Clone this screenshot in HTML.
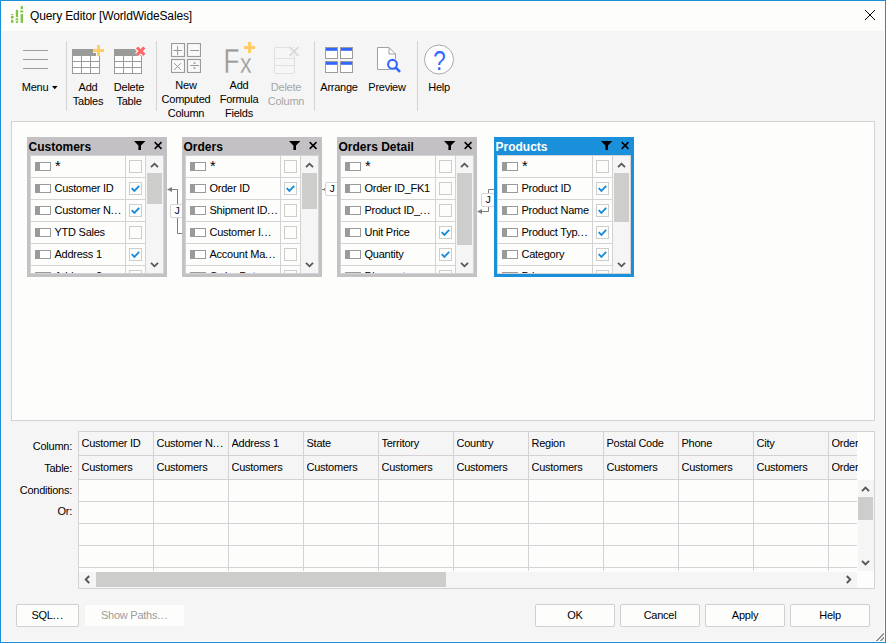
<!DOCTYPE html><html><head><meta charset="utf-8"><title>Query Editor</title><style>
html,body{margin:0;padding:0}
body{width:886px;height:643px;overflow:hidden;background:#f5f5f5;position:relative;font-family:"Liberation Sans",sans-serif;font-size:11px;color:#000;letter-spacing:-0.25px}
*{box-sizing:border-box}
.abs,.ic{position:absolute}
#win{position:absolute;left:0;top:0;width:886px;height:643px;border:1px solid #1a8fda;pointer-events:none;box-shadow:inset 0 0 0 1px #fefdf9}
#title{position:absolute;left:1px;top:1px;width:884px;height:30px;background:#fdfefc}
#title span{position:absolute;left:29px;top:8px;font-size:12px;line-height:15px;white-space:nowrap;letter-spacing:-0.13px}
.sep{position:absolute;top:41px;width:1px;height:70px;background:#d4d2d5}
.lbl{position:absolute;text-align:center;line-height:14px;white-space:nowrap;transform:translateX(-50%)}
.dis{color:#a6a6a6}
#tbline{position:absolute;left:1px;top:120px;width:884px;height:1px;background:#dedede}
#diagram{position:absolute;left:11px;top:121px;width:864px;height:300px;background:#fdfefc;border:1px solid #d4d2d5}
.tbl{position:absolute;top:137px;width:140px;height:140px}
.tt{position:absolute;left:1.5px;top:3px;font-weight:bold;font-size:12px;line-height:14px;white-space:nowrap;letter-spacing:0}
.lst{position:absolute;left:3px;top:18px;width:134px;height:119px;background:#fdfefc;overflow:hidden;border:1px solid #d4d2d5}
.row{position:absolute;left:0;width:115px;height:22px;border-bottom:1px solid #d4d2d5}
.ci{position:absolute;left:4px;top:6px;width:16px;height:9px;border:1px solid #9a9a9a;background:#fff;border-left:5px solid #9a9a9a}
.rl{position:absolute;left:23.5px;top:4px;line-height:13px;white-space:nowrap}
.cb{position:absolute;left:98px;top:4px;width:13px;height:13px;border:1px solid #cccecb;background:#fdfefc}
.cb svg{position:absolute;left:0;top:0}
.d{letter-spacing:0.55px}
.vl{position:absolute;top:0;width:1px;height:117px;background:#d4d2d5}
.sb{position:absolute;left:115px;top:0;width:17px;height:117px;background:#f5f5f5}
.th{position:absolute;left:1px;width:15px;background:#cdcecc}
.jb{position:absolute;width:14px;height:14px;background:#fff;border:1px solid #d6d6d6;border-radius:2px;font-family:'Liberation Mono',monospace;font-size:11px;line-height:12px;text-align:center;color:#0c0c3c;letter-spacing:0;padding-left:0px}
.gl{position:absolute;text-align:right;right:814px;line-height:13px;white-space:nowrap}
#grid{position:absolute;left:78px;top:431px;width:797px;height:158px;background:#fdfefc;border:1px solid #d4d2d5;overflow:hidden}
.hl{position:absolute;left:0;height:1px;background:#d4d2d5;width:778px}
.gv{position:absolute;top:0;width:1px;height:139px;background:#d4d2d5}
.gc{position:absolute;line-height:13px;white-space:nowrap}
.btn{position:absolute;top:604px;height:23px;background:#fdfefc;border:1px solid #d0ced1;border-radius:2px;text-align:center;line-height:21px}
</style></head><body>
<div id="title">
<svg class="ic" style="left:9px;top:4px" width="15" height="19" viewBox="0 0 15 19"><g fill="#82c345"><rect x="1" y="9" width="2.4" height="0.9"/><rect x="0.8" y="10.8" width="2.9" height="2.7" rx="1"/><rect x="1" y="14.8" width="2.4" height="3"/><rect x="5.8" y="4.9" width="2.3" height="7.2"/><rect x="5.5" y="13.2" width="2.9" height="2.1" rx="0.9"/><rect x="5.8" y="16" width="2.3" height="1.8"/><rect x="10.6" y="1" width="2.4" height="3.2" rx="0.8"/><rect x="10.1" y="5.5" width="3.3" height="2.1" rx="0.9"/><rect x="10.6" y="9" width="2.4" height="8.8"/></g></svg>
<span>Query Editor [WorldWideSales]</span>
<svg class="ic" style="left:863px;top:8px" width="12" height="12" viewBox="0 0 12 12"><path d="M1 1L11 11M11 1L1 11" stroke="#000" stroke-width="1" fill="none"/></svg>
</div>
<svg class="ic" style="left:23px;top:49px" width="26" height="21" viewBox="0 0 26 21"><path d="M0 1.5H25M0 10.5H25M0 19.5H25" stroke="#9c9c9c" stroke-width="1"/></svg>
<div class="lbl" style="left:35px;top:80px">Menu</div>
<svg class="ic" style="left:52px;top:86px" width="6" height="4" viewBox="0 0 6 4"><path d="M0 0H5.6L2.8 3.2Z" fill="#000"/></svg>
<div class="sep" style="left:66px"></div>
<div class="sep" style="left:156px"></div>
<div class="sep" style="left:314px"></div>
<div class="sep" style="left:417px"></div>
<svg class="ic" style="left:72px;top:43px" width="36" height="33" viewBox="0 0 36 33"><rect x="0" y="6" width="28" height="7" fill="#9a9b99"/><rect x="0.5" y="12.5" width="27" height="18" fill="#fff" stroke="#9a9b99"/><path d="M9.5 13V30M18.5 13V30M1 18.5H27M1 24.5H27" stroke="#9a9b99" stroke-width="1" fill="none"/><path d="M21 7.5H32M26.5 2V13" stroke="#f5f5f5" stroke-width="5" fill="none"/><path d="M21 7.5H32M26.5 2V13" stroke="#ffcc66" stroke-width="3" fill="none"/></svg>
<svg class="ic" style="left:114px;top:43px" width="36" height="33" viewBox="0 0 36 33"><rect x="0" y="6" width="28" height="7" fill="#9a9b99"/><rect x="0.5" y="12.5" width="27" height="18" fill="#fff" stroke="#9a9b99"/><path d="M9.5 13V30M18.5 13V30M1 18.5H27M1 24.5H27" stroke="#9a9b99" stroke-width="1" fill="none"/><path d="M23 4.5L30.4 11.9M30.4 4.5L23 11.9" stroke="#f5f5f5" stroke-width="5.5" fill="none"/><path d="M23 4.5L30.4 11.9M30.4 4.5L23 11.9" stroke="#ff6666" stroke-width="3" fill="none"/></svg>
<div class="lbl" style="left:88px;top:80px">Add<br>Tables</div>
<div class="lbl" style="left:129px;top:80px">Delete<br>Table</div>
<svg class="ic" style="left:171px;top:43px" width="30" height="30" viewBox="0 0 30 30"><g fill="#f9f9f9" stroke="#9a9a9a" stroke-width="1.15"><rect x="0.5" y="0.5" width="13" height="13"/><rect x="16.5" y="0.5" width="13" height="13"/><rect x="0.5" y="16.5" width="13" height="13"/><rect x="16.5" y="16.5" width="13" height="13"/></g><path d="M2.3 7.5H11M6.6 3V12M19.2 7.5H28M3.2 20.2L9.9 26.9M9.9 20.2L3.2 26.9M19.2 22.5H28" stroke="#999" stroke-width="1" fill="none"/><rect x="22.6" y="19.2" width="1.8" height="1.7" fill="#999"/><rect x="22.6" y="24.2" width="1.8" height="1.7" fill="#999"/></svg>
<div class="lbl" style="left:186px;top:78px">New<br>Computed<br>Column</div>
<svg class="ic" style="left:220px;top:40px" width="40" height="40" viewBox="0 0 40 40" font-family="Liberation Sans, sans-serif" fill="#999" stroke="#f5f5f5" stroke-width="0.35"><text transform="translate(3.6 32.6) scale(0.76 1)" font-size="34.4" x="0" y="0">F</text><text transform="translate(19.9 32.6) scale(0.84 1)" font-size="28" x="0" y="0">x</text></svg>
<svg class="ic" style="left:244px;top:42px" width="11" height="11" viewBox="0 0 11 11"><path d="M0 5.5H11M5.5 0V11" stroke="#ffcc66" stroke-width="3" fill="none"/></svg>
<div class="lbl" style="left:239px;top:78px">Add<br>Formula<br>Fields</div>
<svg class="ic" style="left:274px;top:45px" width="27" height="30" viewBox="0 0 27 30"><rect x="0.5" y="2.5" width="20" height="26" rx="1.5" fill="#f6f6f6" stroke="#e0e0e0"/><path d="M1 13.5H20M1 20.5H20" stroke="#e0e0e0"/><path d="M15.5 2L24.5 11M24.5 2L15.5 11" stroke="#f5f5f5" stroke-width="4"/><path d="M15.5 2L24.5 11M24.5 2L15.5 11" stroke="#dbdbdb" stroke-width="2.1"/></svg>
<div class="lbl dis" style="left:286px;top:80px">Delete<br>Column</div>
<svg class="ic" style="left:325px;top:47px" width="28" height="26" viewBox="0 0 28 26"><rect x="0.5" y="0.5" width="12" height="11" fill="#fff" stroke="#9c9c9c"/><rect x="1" y="1" width="11" height="2.8" fill="#3366ff"/><rect x="15.5" y="0.5" width="12" height="11" fill="#fff" stroke="#9c9c9c"/><rect x="16" y="1" width="11" height="2.8" fill="#3366ff"/><rect x="0.5" y="14.5" width="12" height="11" fill="#fff" stroke="#9c9c9c"/><rect x="1" y="15" width="11" height="2.8" fill="#3366ff"/><rect x="15.5" y="14.5" width="12" height="11" fill="#fff" stroke="#9c9c9c"/><rect x="16" y="15" width="11" height="2.8" fill="#3366ff"/></svg>
<div class="lbl" style="left:339px;top:80px">Arrange</div>
<svg class="ic" style="left:376px;top:46px" width="26" height="28" viewBox="0 0 26 28"><path d="M1.5 1.5H13L19.5 8V23.5H1.5Z" fill="#fff" stroke="#a0a0a0"/><path d="M13 1.5V8H19.5" fill="none" stroke="#a0a0a0"/><circle cx="16.5" cy="18.3" r="6" fill="#f5f5f5"/><circle cx="16.5" cy="18.3" r="4.4" fill="#fff" stroke="#3366ff" stroke-width="2.1"/><path d="M19.8 21.6L24 25.8" stroke="#3366ff" stroke-width="2.6"/></svg>
<div class="lbl" style="left:387px;top:80px">Preview</div>
<svg class="ic" style="left:423px;top:44px" width="32" height="32" viewBox="0 0 32 32"><circle cx="16" cy="15.5" r="14.5" fill="#fff" stroke="#a8a8a8"/><text transform="translate(16.4 26.2) scale(0.8 1)" x="0" y="0" text-anchor="middle" font-family="Liberation Sans, sans-serif" font-size="28" fill="#3366ff">?</text></svg>
<div class="lbl" style="left:439px;top:80px">Help</div>
<div id="diagram"></div>
<svg class="ic" style="left:160px;top:170px" width="340" height="90" viewBox="0 0 340 90"><g fill="none" stroke="#7e7e7e" stroke-width="1"><path d="M8 19.5H17.5V63.5H22"/><path d="M162 19.5H177"/><path d="M334 19.5H328.5V41.5H318"/></g><path d="M7 19.5L12 17V22Z" fill="#7e7e7e"/><path d="M317 41.5L322 39V44Z" fill="#7e7e7e"/><path d="M163 19.5L165.5 17.5V21.5Z" fill="#7e7e7e"/></svg><div class="jb" style="left:170px;top:204px">J</div><div class="jb" style="left:325px;top:182px">J</div><div class="jb" style="left:481px;top:193px">J</div>
<div class="tbl" style="left:27px;background:#c3c1c4">
<div class="tt" style="color:#000">Customers</div>
<svg class="ic" style="left:107px;top:4px" width="12" height="10" viewBox="0 0 12 10"><path d="M0 0H11.4L7 4.6V9H4.4V4.6Z" fill="#000"/></svg>
<svg class="ic" style="left:127px;top:4px" width="9" height="9" viewBox="0 0 9 9"><path d="M0.7 1.1L7.5 7.9M7.5 1.1L0.7 7.9" stroke="#000" stroke-width="1.5" fill="none"/></svg>
<div class="lst">
<div class="row" style="top:0px"><i class="ci"></i><span class="rl" style="left:24px;top:3px;font-size:14.5px;line-height:14px">*</span><i class="cb"></i></div>
<div class="row" style="top:22px"><i class="ci"></i><span class="rl">Customer ID</span><i class="cb"><svg width="11" height="11" viewBox="0 0 11 11"><path d="M1.7 5.2L4.4 7.9L9.2 2.8" stroke="#188ada" stroke-width="1.8" fill="none"/></svg></i></div>
<div class="row" style="top:44px"><i class="ci"></i><span class="rl">Customer N<span class="d">...</span></span><i class="cb"><svg width="11" height="11" viewBox="0 0 11 11"><path d="M1.7 5.2L4.4 7.9L9.2 2.8" stroke="#188ada" stroke-width="1.8" fill="none"/></svg></i></div>
<div class="row" style="top:66px"><i class="ci"></i><span class="rl">YTD Sales</span><i class="cb"></i></div>
<div class="row" style="top:88px"><i class="ci"></i><span class="rl">Address 1</span><i class="cb"><svg width="11" height="11" viewBox="0 0 11 11"><path d="M1.7 5.2L4.4 7.9L9.2 2.8" stroke="#188ada" stroke-width="1.8" fill="none"/></svg></i></div>
<div class="row" style="top:110px"><i class="ci"></i><span class="rl">Address 2</span><i class="cb"></i></div>
<div class="vl" style="left:94px"></div><div class="vl" style="left:114px"></div>
<div class="sb">
<svg class="ic" style="left:4px;top:6px" width="9" height="6" viewBox="0 0 9 6"><path d="M1 5.2L4.5 1.7L8 5.2" stroke="#565656" stroke-width="1.8" fill="none"/></svg>
<div class="th" style="top:17px;height:31px"></div>
<svg class="ic" style="left:4px;top:106px" width="9" height="6" viewBox="0 0 9 6"><path d="M1 0.8L4.5 4.3L8 0.8" stroke="#565656" stroke-width="1.8" fill="none"/></svg>
</div>
</div></div>
<div class="tbl" style="left:182px;background:#c3c1c4">
<div class="tt" style="color:#000">Orders</div>
<svg class="ic" style="left:107px;top:4px" width="12" height="10" viewBox="0 0 12 10"><path d="M0 0H11.4L7 4.6V9H4.4V4.6Z" fill="#000"/></svg>
<svg class="ic" style="left:127px;top:4px" width="9" height="9" viewBox="0 0 9 9"><path d="M0.7 1.1L7.5 7.9M7.5 1.1L0.7 7.9" stroke="#000" stroke-width="1.5" fill="none"/></svg>
<div class="lst">
<div class="row" style="top:0px"><i class="ci"></i><span class="rl" style="left:24px;top:3px;font-size:14.5px;line-height:14px">*</span><i class="cb"></i></div>
<div class="row" style="top:22px"><i class="ci"></i><span class="rl">Order ID</span><i class="cb"><svg width="11" height="11" viewBox="0 0 11 11"><path d="M1.7 5.2L4.4 7.9L9.2 2.8" stroke="#188ada" stroke-width="1.8" fill="none"/></svg></i></div>
<div class="row" style="top:44px"><i class="ci"></i><span class="rl">Shipment ID<span class="d">...</span></span><i class="cb"></i></div>
<div class="row" style="top:66px"><i class="ci"></i><span class="rl">Customer I<span class="d">...</span></span><i class="cb"></i></div>
<div class="row" style="top:88px"><i class="ci"></i><span class="rl">Account Ma<span class="d">...</span></span><i class="cb"></i></div>
<div class="row" style="top:110px"><i class="ci"></i><span class="rl">Order Date</span><i class="cb"></i></div>
<div class="vl" style="left:94px"></div><div class="vl" style="left:114px"></div>
<div class="sb">
<svg class="ic" style="left:4px;top:6px" width="9" height="6" viewBox="0 0 9 6"><path d="M1 5.2L4.5 1.7L8 5.2" stroke="#565656" stroke-width="1.8" fill="none"/></svg>
<div class="th" style="top:17px;height:36px"></div>
<svg class="ic" style="left:4px;top:106px" width="9" height="6" viewBox="0 0 9 6"><path d="M1 0.8L4.5 4.3L8 0.8" stroke="#565656" stroke-width="1.8" fill="none"/></svg>
</div>
</div></div>
<div class="tbl" style="left:337px;background:#c3c1c4">
<div class="tt" style="color:#000">Orders Detail</div>
<svg class="ic" style="left:107px;top:4px" width="12" height="10" viewBox="0 0 12 10"><path d="M0 0H11.4L7 4.6V9H4.4V4.6Z" fill="#000"/></svg>
<svg class="ic" style="left:127px;top:4px" width="9" height="9" viewBox="0 0 9 9"><path d="M0.7 1.1L7.5 7.9M7.5 1.1L0.7 7.9" stroke="#000" stroke-width="1.5" fill="none"/></svg>
<div class="lst">
<div class="row" style="top:0px"><i class="ci"></i><span class="rl" style="left:24px;top:3px;font-size:14.5px;line-height:14px">*</span><i class="cb"></i></div>
<div class="row" style="top:22px"><i class="ci"></i><span class="rl">Order ID_FK1</span><i class="cb"></i></div>
<div class="row" style="top:44px"><i class="ci"></i><span class="rl">Product ID_<span class="d">...</span></span><i class="cb"></i></div>
<div class="row" style="top:66px"><i class="ci"></i><span class="rl">Unit Price</span><i class="cb"><svg width="11" height="11" viewBox="0 0 11 11"><path d="M1.7 5.2L4.4 7.9L9.2 2.8" stroke="#188ada" stroke-width="1.8" fill="none"/></svg></i></div>
<div class="row" style="top:88px"><i class="ci"></i><span class="rl">Quantity</span><i class="cb"><svg width="11" height="11" viewBox="0 0 11 11"><path d="M1.7 5.2L4.4 7.9L9.2 2.8" stroke="#188ada" stroke-width="1.8" fill="none"/></svg></i></div>
<div class="row" style="top:110px"><i class="ci"></i><span class="rl">Discount</span><i class="cb"></i></div>
<div class="vl" style="left:94px"></div><div class="vl" style="left:114px"></div>
<div class="sb">
<svg class="ic" style="left:4px;top:6px" width="9" height="6" viewBox="0 0 9 6"><path d="M1 5.2L4.5 1.7L8 5.2" stroke="#565656" stroke-width="1.8" fill="none"/></svg>
<div class="th" style="top:17px;height:72px"></div>
<svg class="ic" style="left:4px;top:106px" width="9" height="6" viewBox="0 0 9 6"><path d="M1 0.8L4.5 4.3L8 0.8" stroke="#565656" stroke-width="1.8" fill="none"/></svg>
</div>
</div></div>
<div class="tbl" style="left:494px;background:#1a8fda">
<div class="tt" style="color:#fff">Products</div>
<svg class="ic" style="left:107px;top:4px" width="12" height="10" viewBox="0 0 12 10"><path d="M0 0H11.4L7 4.6V9H4.4V4.6Z" fill="#000"/></svg>
<svg class="ic" style="left:127px;top:4px" width="9" height="9" viewBox="0 0 9 9"><path d="M0.7 1.1L7.5 7.9M7.5 1.1L0.7 7.9" stroke="#000" stroke-width="1.5" fill="none"/></svg>
<div class="lst">
<div class="row" style="top:0px"><i class="ci"></i><span class="rl" style="left:24px;top:3px;font-size:14.5px;line-height:14px">*</span><i class="cb"></i></div>
<div class="row" style="top:22px"><i class="ci"></i><span class="rl">Product ID</span><i class="cb"><svg width="11" height="11" viewBox="0 0 11 11"><path d="M1.7 5.2L4.4 7.9L9.2 2.8" stroke="#188ada" stroke-width="1.8" fill="none"/></svg></i></div>
<div class="row" style="top:44px"><i class="ci"></i><span class="rl">Product Name</span><i class="cb"><svg width="11" height="11" viewBox="0 0 11 11"><path d="M1.7 5.2L4.4 7.9L9.2 2.8" stroke="#188ada" stroke-width="1.8" fill="none"/></svg></i></div>
<div class="row" style="top:66px"><i class="ci"></i><span class="rl">Product Typ<span class="d">...</span></span><i class="cb"><svg width="11" height="11" viewBox="0 0 11 11"><path d="M1.7 5.2L4.4 7.9L9.2 2.8" stroke="#188ada" stroke-width="1.8" fill="none"/></svg></i></div>
<div class="row" style="top:88px"><i class="ci"></i><span class="rl">Category</span><i class="cb"><svg width="11" height="11" viewBox="0 0 11 11"><path d="M1.7 5.2L4.4 7.9L9.2 2.8" stroke="#188ada" stroke-width="1.8" fill="none"/></svg></i></div>
<div class="row" style="top:110px"><i class="ci"></i><span class="rl">Price</span><i class="cb"></i></div>
<div class="vl" style="left:94px"></div><div class="vl" style="left:114px"></div>
<div class="sb">
<svg class="ic" style="left:4px;top:6px" width="9" height="6" viewBox="0 0 9 6"><path d="M1 5.2L4.5 1.7L8 5.2" stroke="#565656" stroke-width="1.8" fill="none"/></svg>
<div class="th" style="top:17px;height:49px"></div>
<svg class="ic" style="left:4px;top:106px" width="9" height="6" viewBox="0 0 9 6"><path d="M1 0.8L4.5 4.3L8 0.8" stroke="#565656" stroke-width="1.8" fill="none"/></svg>
</div>
</div></div>
<div class="gl" style="top:440px">Column:</div>
<div class="gl" style="top:462px">Table:</div>
<div class="gl" style="top:484px">Conditions:</div>
<div class="gl" style="top:505px">Or:</div>
<div id="grid">
<div class="abs" style="left:0;top:0;width:778px;height:48px;background:#f5f5f5"></div>
<div class="gc" style="left:2.5px;top:5px;width:72px;overflow:hidden">Customer ID</div>
<div class="gc" style="left:2.5px;top:29px;width:72px;overflow:hidden">Customers</div>
<div class="gc" style="left:77.5px;top:5px;width:72px;overflow:hidden">Customer N<span class="d">...</span></div>
<div class="gc" style="left:77.5px;top:29px;width:72px;overflow:hidden">Customers</div>
<div class="gv" style="left:74px"></div>
<div class="gc" style="left:152.5px;top:5px;width:72px;overflow:hidden">Address 1</div>
<div class="gc" style="left:152.5px;top:29px;width:72px;overflow:hidden">Customers</div>
<div class="gv" style="left:149px"></div>
<div class="gc" style="left:227.5px;top:5px;width:72px;overflow:hidden">State</div>
<div class="gc" style="left:227.5px;top:29px;width:72px;overflow:hidden">Customers</div>
<div class="gv" style="left:224px"></div>
<div class="gc" style="left:302.5px;top:5px;width:72px;overflow:hidden">Territory</div>
<div class="gc" style="left:302.5px;top:29px;width:72px;overflow:hidden">Customers</div>
<div class="gv" style="left:299px"></div>
<div class="gc" style="left:377.5px;top:5px;width:72px;overflow:hidden">Country</div>
<div class="gc" style="left:377.5px;top:29px;width:72px;overflow:hidden">Customers</div>
<div class="gv" style="left:374px"></div>
<div class="gc" style="left:452.5px;top:5px;width:72px;overflow:hidden">Region</div>
<div class="gc" style="left:452.5px;top:29px;width:72px;overflow:hidden">Customers</div>
<div class="gv" style="left:449px"></div>
<div class="gc" style="left:527.5px;top:5px;width:72px;overflow:hidden">Postal Code</div>
<div class="gc" style="left:527.5px;top:29px;width:72px;overflow:hidden">Customers</div>
<div class="gv" style="left:524px"></div>
<div class="gc" style="left:602.5px;top:5px;width:72px;overflow:hidden">Phone</div>
<div class="gc" style="left:602.5px;top:29px;width:72px;overflow:hidden">Customers</div>
<div class="gv" style="left:599px"></div>
<div class="gc" style="left:677.5px;top:5px;width:72px;overflow:hidden">City</div>
<div class="gc" style="left:677.5px;top:29px;width:72px;overflow:hidden">Customers</div>
<div class="gv" style="left:674px"></div>
<div class="gc" style="left:752.5px;top:5px;width:26px;overflow:hidden">Order ID</div>
<div class="gc" style="left:752.5px;top:29px;width:26px;overflow:hidden">Orders</div>
<div class="gv" style="left:749px"></div>
<div class="hl" style="top:23px"></div>
<div class="hl" style="top:47px"></div>
<div class="hl" style="top:69px"></div>
<div class="hl" style="top:91px"></div>
<div class="hl" style="top:113px"></div>
<div class="hl" style="top:135px"></div>
<div class="abs" style="left:779px;top:48px;width:16px;height:91px;background:#f5f5f5"><svg class="ic" style="left:3px;top:6px" width="9" height="6" viewBox="0 0 9 6"><path d="M1 5.2L4.5 1.7L8 5.2" stroke="#565656" stroke-width="1.9" fill="none"/></svg><div class="abs" style="left:0;width:15px;background:#cdcecc;top:17px;height:23px"></div><svg class="ic" style="left:3px;top:80px" width="9" height="6" viewBox="0 0 9 6"><path d="M1 0.8L4.5 4.3L8 0.8" stroke="#565656" stroke-width="1.9" fill="none"/></svg></div>
<div class="abs" style="left:0;top:140px;width:778px;height:16px;background:#f5f5f5"><svg class="ic" style="left:5px;top:3px" width="6" height="9" viewBox="0 0 6 9"><path d="M5.2 1L1.7 4.5L5.2 8" stroke="#565656" stroke-width="1.9" fill="none"/></svg><div class="abs" style="left:17px;top:0;width:350px;height:15px;background:#cdcecc"></div><svg class="ic" style="left:767px;top:3px" width="6" height="9" viewBox="0 0 6 9"><path d="M0.8 1L4.3 4.5L0.8 8" stroke="#565656" stroke-width="1.9" fill="none"/></svg></div>
</div>
<div class="btn" style="left:16px;width:63px">SQL<span class="d">...</span></div>
<div class="btn" style="left:84px;width:101px;border-color:#f5f5f5;color:#9c9c9c">Show Paths<span class="d">...</span></div>
<div class="btn" style="left:535px;width:80px">OK</div>
<div class="btn" style="left:620px;width:80px">Cancel</div>
<div class="btn" style="left:705px;width:80px">Apply</div>
<div class="btn" style="left:790px;width:80px">Help</div>
<svg class="ic" style="left:871px;top:629px" width="14" height="13" viewBox="0 0 14 13"><path d="M2.6 13L14 1.6M6.6 13L14 5.6M10.6 13L14 9.6" stroke="#fff" stroke-width="1.4"/><path d="M4.6 13L14 3.6M8.6 13L14 7.6M12.6 13L14 11.6" stroke="#858585" stroke-width="1.4"/></svg>
<div id="win"></div>
</body></html>
